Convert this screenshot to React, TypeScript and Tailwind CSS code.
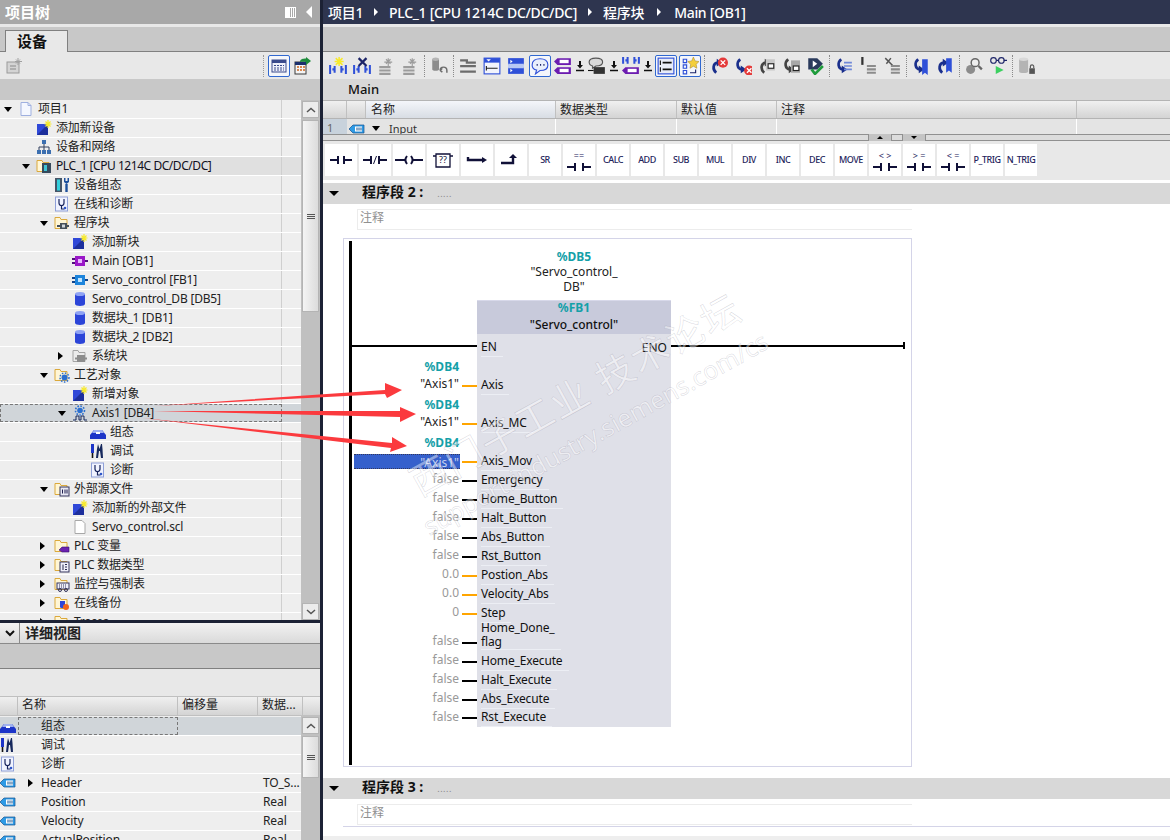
import React from "react";

const FONT = "[font-family:'Noto_Sans','Noto_Sans_CJK_SC',sans-serif]";

function Ic({ children, size = 16 }: { children: React.ReactNode; size?: number }) {
  return (
    <svg width={size} height={size} viewBox="0 0 16 16" className="shrink-0">
      {children}
    </svg>
  );
}

const Folder = ({ children }: { children?: React.ReactNode }) => (
  <Ic>
    <path d="M1 2.500h5l1 2h6v9H1z" fill="#fff6d6" stroke="#dba93c" />
    {children}
  </Ic>
);

const treeIcons: Record<string, React.ReactNode> = {
  doc: (
    <Ic>
      <path d="M3 1.500h7l3 3v10H3z" fill="#f4f7ff" stroke="#9fb0e0" />
      <path d="M10 1.500v3h3" fill="none" stroke="#9fb0e0" />
    </Ic>
  ),
  add: (
    <Ic>
      <rect x="1" y="4" width="11" height="11" fill="#2f48d8" />
      <path d="M1 15 12 4v11z" fill="#1d2f9c" />
      <path d="M12 0v8M8.500 4h7M9.500 1.500l5 5M14.500 1.500l-5 5" stroke="#f7ea2c" strokeWidth="1.200" />
    </Ic>
  ),
  net: (
    <Ic>
      <path d="M8 4v4M3 13V8h10v5M8 8v5" fill="none" stroke="#33415e" />
      <rect x="6" y="1" width="4" height="4" fill="#3c6fb0" />
      <rect x="1" y="11" width="4" height="4" fill="#3c6fb0" />
      <rect x="6" y="11" width="4" height="4" fill="#3c6fb0" />
      <rect x="11" y="11" width="4" height="4" fill="#3c6fb0" />
    </Ic>
  ),
  plc: (
    <Folder>
      <rect x="6" y="5" width="9" height="10" fill="#36495c" />
      <rect x="8" y="7" width="3" height="6" fill="#3fc4d4" />
    </Folder>
  ),
  config: (
    <Ic>
      <rect x="1" y="1" width="7" height="14" fill="#455568" />
      <rect x="3" y="2.500" width="3" height="11" fill="#33d0dd" />
      <path d="M12.500 7v8" stroke="#1c4f9c" strokeWidth="2.400" />
      <path d="M10 1v4l2.500 2 2.500-2V1l-1.500 0v3h-2V1z" fill="#1c4f9c" />
    </Ic>
  ),
  diag: (
    <Ic>
      <rect x="1.500" y="1" width="12" height="14" fill="#f0f3ff" stroke="#8fa0d8" />
      <path d="M5 3v4a2.500 2.500 0 0 0 5 0V3M7.500 9.500V13h3" fill="none" stroke="#17245c" strokeWidth="1.200" />
      <circle cx="11" cy="12" r="1.300" fill="#2f57c8" />
    </Ic>
  ),
  blocks: (
    <Folder>
      <rect x="6" y="8" width="7" height="6" fill="#46505a" />
      <path d="M3 11h12" stroke="#46505a" strokeWidth="2" />
      <rect x="8" y="9.500" width="3" height="3" fill="#cfd6dc" />
    </Folder>
  ),
  ob: (
    <Ic>
      <rect x="3" y="3" width="10" height="10" fill="#9a18c8" />
      <rect x="6" y="6" width="4" height="4" fill="#e8b8ff" />
      <path d="M0 6h3M0 10h3M13 8h3" stroke="#52107c" strokeWidth="2" />
    </Ic>
  ),
  fb: (
    <Ic>
      <rect x="3" y="3" width="10" height="10" fill="#1c84dc" />
      <rect x="6" y="6" width="4" height="4" fill="#bfe4ff" />
      <path d="M0 6h3M0 10h3M13 8h3" stroke="#10448c" strokeWidth="2" />
    </Ic>
  ),
  db: (
    <Ic>
      <path d="M3 3v10c0 2.600 10 2.600 10 0V3z" fill="#2c45d8" />
      <ellipse cx="8" cy="3" rx="5" ry="2" fill="#8ea2f4" />
    </Ic>
  ),
  sys: (
    <Ic>
      <path d="M1 2.500h5l1 2h6v9H1z" fill="#ececec" stroke="#a4a4a4" />
      <rect x="5" y="7" width="8" height="7" fill="#8d8d8d" />
      <path d="M3 10.500h12" stroke="#8d8d8d" strokeWidth="2" />
    </Ic>
  ),
  tech: (
    <Folder>
      <circle cx="10.500" cy="10.500" r="3" fill="#2a6fd0" />
      <circle cx="10.500" cy="10.500" r="4.500" fill="none" stroke="#2a6fd0" strokeWidth="1.500" strokeDasharray="1.500 1.500" />
    </Folder>
  ),
  axis: (
    <Ic>
      <circle cx="8" cy="5.500" r="2.800" fill="#2a6fd0" />
      <circle cx="8" cy="5.500" r="4.500" fill="none" stroke="#2a6fd0" strokeWidth="1.600" strokeDasharray="1.600 1.400" />
      <path d="M1 15h3v-4h3v4h2v-4h3v4h3" fill="none" stroke="#16285c" />
    </Ic>
  ),
  box: (
    <Ic>
      <path d="M0 15v-4l4-5h8l4 5v4z" fill="#1d35c8" />
      <path d="M4 6h8l2 3H2z" fill="#9fb0f0" />
      <rect x="6" y="8" width="4" height="2" fill="#fff" />
    </Ic>
  ),
  tools: (
    <Ic>
      <rect x="1" y="1" width="3" height="9" fill="#1d35c8" />
      <path d="M2.500 10v5" stroke="#111" strokeWidth="1.600" />
      <path d="M8 1l1.500 5L11 1l1 0 .5 5 .5 9h-2L10 8H9l-1 7H6l1-9z" fill="#16285c" />
    </Ic>
  ),
  src: (
    <Folder>
      <rect x="6" y="6" width="9" height="9" fill="#e8e8f4" stroke="#34345c" />
      <path d="M8.500 8.500v4M11 8.500v4M13 8.500v4" stroke="#1c1c4c" />
    </Folder>
  ),
  file: (
    <Ic>
      <path d="M3 1.500h7l3 3v10H3z" fill="#fff" stroke="#a8a8a8" />
    </Ic>
  ),
  tags: (
    <Folder>
      <path d="M5 12l3-3h7v5H8z" fill="#6c22b0" stroke="#3a1270" strokeWidth=".6" />
    </Folder>
  ),
  types: (
    <Folder>
      <rect x="6" y="5" width="9" height="10" fill="#f0f0fa" stroke="#34345c" />
      <path d="M9 7.500v5.500M11 7.500h2M11 10h2M11 12.500h2" stroke="#28284c" />
    </Folder>
  ),
  watch: (
    <Folder>
      <rect x="3" y="7" width="12" height="6" fill="#f0f0f8" stroke="#34345c" />
      <path d="M5 9h8M5 11h8" stroke="#34345c" strokeDasharray="1 1" />
      <circle cx="6" cy="14" r="1.500" fill="none" stroke="#34345c" />
      <circle cx="12" cy="14" r="1.500" fill="none" stroke="#34345c" />
    </Folder>
  ),
  backup: (
    <Folder>
      <path d="M6 6v6c0 1.500 5 1.500 5 0V6z" fill="#2c45d8" />
      <circle cx="12" cy="12" r="3" fill="#f0641c" />
    </Folder>
  ),
  tag: (
    <Ic>
      <path d="M0 8l4-4h11v8H4z" fill="#2e9be6" stroke="#14508c" strokeWidth=".7" />
      <rect x="6" y="5.500" width="7" height="5" fill="#fff" />
      <path d="M8 6.500v3M10 6.500v3M12 6.500v3" stroke="#14508c" />
    </Ic>
  ),
};

const treeRows = [
  { level: 0, open: "down", icon: "doc", label: "项目1" },
  { level: 1, icon: "add", label: "添加新设备" },
  { level: 1, icon: "net", label: "设备和网络" },
  { level: 1, open: "down", icon: "plc", label: "PLC_1 [CPU 1214C DC/DC/DC]", hi: true },
  { level: 2, icon: "config", label: "设备组态" },
  { level: 2, icon: "diag", label: "在线和诊断" },
  { level: 2, open: "down", icon: "blocks", label: "程序块" },
  { level: 3, icon: "add", label: "添加新块" },
  { level: 3, icon: "ob", label: "Main [OB1]" },
  { level: 3, icon: "fb", label: "Servo_control [FB1]" },
  { level: 3, icon: "db", label: "Servo_control_DB [DB5]" },
  { level: 3, icon: "db", label: "数据块_1 [DB1]" },
  { level: 3, icon: "db", label: "数据块_2 [DB2]" },
  { level: 3, open: "right", icon: "sys", label: "系统块" },
  { level: 2, open: "down", icon: "tech", label: "工艺对象" },
  { level: 3, icon: "add", label: "新增对象" },
  { level: 3, open: "down", icon: "axis", label: "Axis1 [DB4]", sel: true },
  { level: 4, icon: "box", label: "组态" },
  { level: 4, icon: "tools", label: "调试" },
  { level: 4, icon: "diag", label: "诊断" },
  { level: 2, open: "down", icon: "src", label: "外部源文件" },
  { level: 3, icon: "add", label: "添加新的外部文件" },
  { level: 3, icon: "file", label: "Servo_control.scl" },
  { level: 2, open: "right", icon: "tags", label: "PLC 变量" },
  { level: 2, open: "right", icon: "types", label: "PLC 数据类型" },
  { level: 2, open: "right", icon: "watch", label: "监控与强制表" },
  { level: 2, open: "right", icon: "backup", label: "在线备份" },
  { level: 2, open: "right", icon: "blocks", label: "Traces" },
];

const levelPad = ["pl-[4px]", "pl-[22px]", "pl-[40px]", "pl-[58px]", "pl-[76px]"];

function Caret({ dir }: { dir?: string }) {
  if (dir === "down") return <span className="w-0 h-0 border-x-[4px] border-x-transparent border-t-[5px] border-t-black" />;
  if (dir === "right") return <span className="w-0 h-0 border-y-[4px] border-y-transparent border-l-[5px] border-l-black" />;
  return null;
}

function Scrollbar({ height, grip }: { height: string; grip?: boolean }) {
  return (
    <div className="w-[19px] h-full bg-[#c0c0c0] flex flex-col items-center shrink-0 pt-[1px]">
      <div className="w-[17px] h-[17px] bg-[#ececec] border border-[#b4b4b4] flex items-center justify-center">
        <svg width="10" height="6" viewBox="0 0 10 6"><path d="M1 5l4-3.500L9 5" fill="none" stroke="#555" strokeWidth="1.500" /></svg>
      </div>
      <div className={`w-[17px] ${height} mt-[2px] bg-linear-to-r from-[#f4f4f4] to-[#dcdcdc] border border-[#b4b4b4] flex flex-col items-center justify-center gap-[1px]`}>
        {grip && (
          <>
            <span className="w-[8px] h-[1px] bg-[#555]" />
            <span className="w-[8px] h-[1px] bg-[#555]" />
            <span className="w-[8px] h-[1px] bg-[#555]" />
          </>
        )}
      </div>
      <div className="flex-1" />
    </div>
  );
}

function ProjectTree() {
  return (
    <div className="h-[520px] flex bg-[#eeeeee] overflow-hidden shrink-0">
      <div className="w-[301px] flex flex-col">
        {treeRows.map((r) => (
          <div
            key={r.label}
            className={`h-[19px] shrink-0 flex border-b border-white ${r.sel ? "bg-[#d0d5d9]" : r.hi ? "bg-[#e0e0e0]" : ""}`}
          >
            <div
              className={`w-[282px] border-r border-[#cfcfcf] flex items-center ${levelPad[r.level]} ${r.sel ? "outline-1 -outline-offset-1 outline-dashed outline-[#777]" : ""}`}
            >
              <span className="w-[14px] flex justify-start shrink-0"><Caret dir={r.open} /></span>
              <span className="w-[19px] shrink-0">{treeIcons[r.icon]}</span>
              <span className={`ml-px text-[12px] leading-none whitespace-nowrap ${r.hi ? "tracking-[-0.45px] text-[#101020]" : "tracking-[-0.2px] text-[#222]"}`}>{r.label}</span>
            </div>
          </div>
        ))}
      </div>
      <div className="relative h-full">
        <Scrollbar height="h-[192px]" grip />
        <div className="absolute bottom-0 left-[1px] w-[17px] h-[17px] bg-[#ececec] border border-[#b4b4b4] flex items-center justify-center">
          <svg width="10" height="6" viewBox="0 0 10 6"><path d="M1 1l4 3.500L9 1" fill="none" stroke="#555" strokeWidth="1.500" /></svg>
        </div>
      </div>
    </div>
  );
}

const detailRows = [
  { icon: "box", name: "组态", sel: true },
  { icon: "tools", name: "调试" },
  { icon: "diag", name: "诊断" },
  { icon: "tag", name: "Header", type: "TO_S...", open: true },
  { icon: "tag", name: "Position", type: "Real" },
  { icon: "tag", name: "Velocity", type: "Real" },
  { icon: "tag", name: "ActualPosition", type: "Real" },
];

function DetailView() {
  return (
    <div className="flex-1 flex flex-col min-h-0 overflow-hidden">
      <div className="h-[21px] shrink-0 flex bg-linear-to-b from-[#f2f2f2] to-[#dadada] border-b border-[#8a8a8a]">
        <div className="w-[20px] border-r border-[#8a8a8a] flex items-center justify-center">
          <svg width="10" height="7" viewBox="0 0 10 7"><path d="M1 1l4 4 4-4" fill="none" stroke="#111" strokeWidth="2" /></svg>
        </div>
        <div className="pl-[5px] text-[14px] font-bold leading-[20px] text-[#222]">详细视图</div>
      </div>
      <div className="h-[25px] shrink-0 bg-[#c8c8c8] border-b border-[#808080]" />
      <div className="h-[27px] shrink-0 bg-[#e8e8e8]" />
      <div className="h-[20px] shrink-0 flex bg-linear-to-b from-[#f0f0f0] to-[#d4d4d4] border-y border-[#c0c0c0] text-[12px] leading-[16px] text-[#222]">
        <div className="w-[18px] border-r border-[#c0c0c0]" />
        <div className="w-[160px] border-r border-[#c0c0c0] pl-[4px]">名称</div>
        <div className="w-[80px] border-r border-[#c0c0c0] pl-[4px]">偏移量</div>
        <div className="w-[45px] border-r border-[#c0c0c0] pl-[4px] whitespace-nowrap overflow-hidden">数据...</div>
      </div>
      <div className="flex-1 flex min-h-0">
        <div className="w-[301px] flex flex-col bg-[#eeeeee] pt-[1px]">
          {detailRows.map((r) => (
            <div key={r.name} className={`h-[19px] shrink-0 flex items-center border-b border-white text-[12px] tracking-[-0.1px] text-[#222] ${r.sel ? "bg-[#d0d5d9]" : ""}`}>
              <span className="w-[18px] shrink-0">{treeIcons[r.icon]}</span>
              <div className={`w-[160px] h-full flex items-center ${r.sel ? "outline-1 -outline-offset-1 outline-dashed outline-[#777]" : ""}`}>
                <span className="w-[23px] flex justify-center pl-[2px]">{r.open && <Caret dir="right" />}</span>
                <span className="leading-none">{r.name}</span>
              </div>
              <span className="w-[80px]" />
              <span className="pl-[5px] leading-none whitespace-nowrap">{r.type}</span>
            </div>
          ))}
        </div>
        <Scrollbar height="h-[42px]" grip />
      </div>
    </div>
  );
}

function LeftPane() {
  return (
    <div className="w-[320px] h-full flex flex-col shrink-0">
      <div className="h-[24px] shrink-0 bg-[#a8a8a8] flex items-center justify-between pl-[5px] pr-[8px]">
        <span className="text-[15px] font-bold text-white">项目树</span>
        <div className="flex items-center gap-[10px]">
          <span className="w-[11px] h-[11px] border border-white flex">
            <span className="w-[4px] h-full bg-white" />
            <span className="w-[1px] h-full bg-white ml-[1px]" />
            <span className="w-[1px] h-full bg-white ml-[1px]" />
          </span>
          <span className="w-0 h-0 border-y-[6px] border-y-transparent border-r-[6px] border-r-white" />
        </div>
      </div>
      <div className="h-[3px] shrink-0 bg-[#e8e8e8]" />
      <div className="h-[25px] shrink-0 bg-[#c8c8c8] border-b border-[#808080] flex items-end pl-[5px]">
        <div className="w-[63px] h-[22px] -mb-px bg-[#e8e8e8] border border-b-0 border-[#808080] text-[15px] font-bold leading-[21px] pl-[11px] text-[#111]">设备</div>
      </div>
      <div className="h-[27px] shrink-0 bg-[#e8e8e8] flex items-center pl-[6px] pr-[9px]">
        <svg width="16" height="16" viewBox="0 0 16 16">
          <rect x="1" y="4" width="12" height="11" fill="#d4d4d4" stroke="#9a9a9a" />
          <path d="M4 8h6M4 11h6" stroke="#8a8a8a" />
          <path d="M12 0v7M9 3.500h7M10 1.500l4 4M14 1.500l-4 4" stroke="#a0a0a0" />
        </svg>
        <div className="flex-1" />
        <div className="h-[22px] border-l border-dotted border-[#999] mr-[4px]" />
        <div className="w-[22px] h-[22px] bg-[#f4f6fb] border border-[#3068d0] rounded-[2px] flex items-center justify-center">
          <svg width="16" height="14" viewBox="0 0 16 14">
            <rect x="1" y="1" width="14" height="12" fill="#eef0fa" stroke="#3a4a8c" />
            <rect x="1" y="1" width="14" height="3" fill="#3a4a8c" />
            <path d="M3 6.500h10M3 9h10M3 11h10" stroke="#3a4a8c" strokeDasharray="2 1" />
          </svg>
        </div>
        <div className="w-[4px]" />
        <svg width="17" height="18" viewBox="0 0 17 18">
          <rect x="1" y="5" width="11" height="12" fill="#f4f4f4" stroke="#3a3a3a" />
          <rect x="1" y="5" width="11" height="3" fill="#1c2f6c" />
          <path d="M3 10h2M6 10h2M9 10h2M3 13h2M6 13h2M9 13h2" stroke="#d0661c" strokeWidth="1.500" />
          <path d="M6 5c0-3 3-3.500 6-3.500V0l5 4-5 4V5C10 4.500 8 4.500 6 5z" fill="#1f8c3c" />
        </svg>
      </div>
      <div className="h-[21px] shrink-0 bg-[#c8c8c8]" />
      <ProjectTree />
      <div className="h-[3px] shrink-0 bg-[#1c2235]" />
      <DetailView />
    </div>
  );
}

const NAVY = "#1a2f8c";
const BLUE = "#2f50d8";

const NetGlyph = () => (
  <path d="M1 7v8M15 7v8M3 11h2M13 11h-2M5 8v6M11 8v6" stroke={BLUE} strokeWidth="1.800" fill="none" />
);
const Star = ({ c = "#f7ea2c" }: { c?: string }) => (
  <path d="M9 0v8M5 4h8M6 1l6 6M12 1l-6 6" stroke={c} strokeWidth="1.300" />
);
const Lines = ({ c = "#8c8c8c" }: { c?: string }) => (
  <path d="M2 9h10M2 12h10M2 15h10" stroke={c} strokeWidth="1.800" />
);
const TagGlyph = ({ y = 0 }: { y?: number }) => (
  <g transform={`translate(0 ${y})`}>
    <path d="M0 4l3-3h12v6H3z" fill="#6c1cb0" />
    <rect x="5" y="2.500" width="8" height="3" fill="#fff" />
  </g>
);
// curved jump arrow, head top right (down: head bottom right)
const Hook = ({ down, c = NAVY }: { down?: boolean; c?: string }) => (
  <g transform={down ? "translate(0 16) scale(1 -1)" : undefined}>
    <path d="M7 5C2.500 5.500 2 11 5.500 14" fill="none" stroke={c} strokeWidth="2.400" />
    <path d="M6 1.500 11 5 6 8.500z" fill={c} />
  </g>
);
const RedX = () => (
  <>
    <circle cx="11.500" cy="5" r="4.500" fill="#e43a3a" />
    <path d="M9.500 3l4 4M13.500 3l-4 4" stroke="#fff" strokeWidth="1.200" />
  </>
);

const tb: Record<string, React.ReactNode> = {
  netNew: <><NetGlyph /><Star /></>,
  netDel: <><NetGlyph /><path d="M5 1l7 7M12 1l-7 7" stroke="#1c2468" strokeWidth="2" /></>,
  netA: <><Lines c="#9c9c9c" /><path d="M10 1v7M6.500 4.500h7M8 2l4 4M12 2l-4 4" stroke="#9c9c9c" /></>,
  dbBack: <><path d="M2 2v9c0 1.500 6 1.500 6 0V2z" fill="#8c8c8c" /><ellipse cx="5" cy="2" rx="3" ry="1.500" fill="#b4b4b4" /><path d="M9 12a3 3 0 0 1 6 0v2M9 12l2-2M9 12l2 1.500" fill="none" stroke="#6c6c6c" strokeWidth="1.300" /></>,
  lines: <path d="M1 3h6v2h8M1 8h14M1 13h14" stroke="#6c6c6c" strokeWidth="2" fill="none" />,
  hdrUp: <><rect x="1" y="1" width="14" height="14" fill="#f2f4fc" stroke={BLUE} /><rect x="1" y="1" width="14" height="4" fill={BLUE} /><path d="M3 10h10M3 8v4" stroke="#222" /><path d="M3 2l2 2 2-2z" fill="#fff" /></>,
  hdrDn: <><rect x="1" y="1" width="14" height="6" fill={BLUE} /><rect x="1" y="9" width="14" height="6" fill={BLUE} /><rect x="1" y="6" width="14" height="4" fill="#b8c8f4" /><path d="M3 2.500l2 1.500-2 1.500zM3 10.500l2 1.500-2 1.500z" fill="#fff" /></>,
  comment: <><path d="M8 1.500c4 0 7 2 7 5.500s-3 5-7 5l-4 3 1-3.500C2.500 11 1 9.500 1 7c0-3.500 3-5.500 7-5.500z" fill="#e8eefc" stroke={BLUE} /><path d="M5 7h1M8 7h1M11 7h1" stroke="#1c2468" strokeWidth="1.500" /></>,
  tagSet: <><TagGlyph /><TagGlyph y={8} /></>,
  cmtSet: <><path d="M7 1c4 0 6 1.500 6 3.500S11 8 7 8L4 10V8C2 7.500 1 6.500 1 4.500S3 1 7 1z" fill="#d8d8d8" stroke="#555" /><rect x="5" y="9" width="10" height="6" fill="#333" /><path d="M0 12h5" stroke="#111" /></>,
  netTag: <><path d="M1 0v6M15 0v6M3 3h2M13 3h-2M5 0v6M11 0v6" stroke={BLUE} strokeWidth="1.800" /><TagGlyph y={8} /></>,
  abs: <><rect x="1" y="1" width="14" height="14" fill="#e8ecf8" stroke={BLUE} /><path d="M5 5h8M5 11h8" stroke="#111" strokeWidth="1.500" /><path d="M3 3v4M3 9v4" stroke="#111" /></>,
  fav: <><path d="M2 2h3v3H2zM2 7h3v3H2zM2 12h3v3H2z" fill="none" stroke={BLUE} /><path d="M11 0l1.500 3.500 3.500.5-2.500 2.500.6 3.500-3.100-1.800L8 10l.6-3.500L6 4l3.500-.5z" fill="#f4cf3c" stroke="#a8882c" strokeWidth=".5" /><path d="M13 11v3H8" fill="none" stroke="#1c2468" /></>,
  errUp: <><Hook /><RedX /></>,
  errDn: <><Hook down /><g transform="translate(2 7)"><RedX /></g></>,
  gotoA: <><Hook c="#444" /><rect x="7" y="2" width="8" height="10" fill="#c8c8c8" /><rect x="9" y="6" width="5" height="4" fill="#fff" stroke="#222" /></>,
  gotoB: <><Hook down c="#444" /><rect x="8" y="3" width="8" height="11" fill="#a8a8a8" /><rect x="10" y="8" width="5" height="4" fill="#fff" stroke="#222" /></>,
  check: <><path d="M2 1h8l5 5-5 5H2z" fill="#2a3a5c" /><path d="M6 3l4 3-4 3z" fill="#fff" /><path d="M5 11l3 4 7-7" fill="none" stroke="#1f9c3c" strokeWidth="2.400" /></>,
  prevL: <><Hook down /><path d="M8 5h7M8 8h7M8 11h7" stroke="#6f88d8" strokeWidth="1.500" /></>,
  barL: <><path d="M3 0v7" stroke="#333" strokeWidth="2" /><path d="M7 8h8M7 11h8M7 14h8" stroke="#8c8c8c" strokeWidth="1.800" /></>,
  cutL: <><path d="M2 1l7 7M7 1L3 6" stroke="#555" strokeWidth="1.300" /><path d="M7 8h8M7 11h8M7 14h8" stroke="#8c8c8c" strokeWidth="1.800" /></>,
  bmA: <><Hook down /><path d="M9 2h5v14l-2.500-2L9 16z" fill={BLUE} /></>,
  bmB: <><Hook /><path d="M9 1h5v13l-2.500-2L9 14z" fill={BLUE} /></>,
  find: <><circle cx="5" cy="11" r="4" fill="#8c8c8c" /><circle cx="9" cy="5" r="3.500" fill="#eee" stroke="#666" strokeWidth="1.300" /><path d="M12 8l3 3" stroke="#666" strokeWidth="2" /></>,
  glasses: <><circle cx="4" cy="3" r="2.500" fill="none" stroke="#1c2468" /><circle cx="11" cy="3" r="2.500" fill="none" stroke="#1c2468" /><path d="M6.500 3h2M13 3h3" stroke="#1c2468" /><path d="M6 8l7 3.500L6 15z" fill="#3cd060" /></>,
  dbLock: <><path d="M1 2v11c0 1.500 8 1.500 8 0V2z" fill="#b4b4b4" /><ellipse cx="5" cy="2" rx="4" ry="1.500" fill="#d8d8d8" /><rect x="10" y="10" width="5" height="5" fill="#555" /><path d="M11 10V8.500a1.500 1.500 0 0 1 3 0V10" fill="none" stroke="#555" /></>,
};

const DownArrow = () => (
  <svg width="10" height="12" viewBox="0 0 10 12" className="shrink-0">
    <path d="M5 1v5" stroke="#111" strokeWidth="2" />
    <path d="M2 5h6L5 8.500z" fill="#111" />
    <path d="M1 10.500h8" stroke="#111" strokeWidth="1.500" />
  </svg>
);

function TbBtn({ k, sel, drop }: { k: string; sel?: boolean; drop?: boolean }) {
  const inner = (
    <svg width="18" height="18" viewBox="0 0 16 16" className="shrink-0">{tb[k]}</svg>
  );
  if (sel)
    return <div className="w-[22px] h-[22px] mx-px bg-[#f4f6fb] border border-[#3068d0] rounded-[2px] flex items-center justify-center">{inner}</div>;
  return (
    <div className={`${drop ? "w-[34px] gap-[3px]" : "w-[24px]"} h-[22px] flex items-center justify-center`}>
      {inner}
      {drop && <DownArrow />}
    </div>
  );
}

const Sep = () => <div className="h-[22px] w-px mx-[2px] border-l border-dotted border-[#8a8a8a]" />;

function EditorToolbar() {
  const groups: { k: string; sel?: boolean; drop?: boolean }[][] = [
    [{ k: "netNew" }, { k: "netDel" }, { k: "netA" }, { k: "netA" }],
    [{ k: "dbBack" }],
    [
      { k: "lines" }, { k: "hdrUp" }, { k: "hdrDn" }, { k: "comment", sel: true },
      { k: "tagSet", drop: true }, { k: "cmtSet", drop: true }, { k: "netTag", drop: true },
      { k: "abs", sel: true }, { k: "fav", sel: true },
    ],
    [{ k: "errUp" }, { k: "errDn" }, { k: "gotoA" }, { k: "gotoB" }, { k: "check" }],
    [{ k: "prevL" }, { k: "barL" }, { k: "cutL" }],
    [{ k: "bmA" }, { k: "bmB" }],
    [{ k: "find" }, { k: "glasses" }],
    [{ k: "dbLock" }],
  ];
  return (
    <div className="h-[27px] shrink-0 bg-[#e8e8e8] flex items-center pl-[3px]">
      {groups.map((g, i) => (
        <React.Fragment key={i}>
          {i > 0 && <Sep />}
          {g.map((b, j) => <TbBtn key={j} {...b} />)}
        </React.Fragment>
      ))}
    </div>
  );
}

const C = "#111138";
const instr: Record<string, React.ReactNode> = {
  no: <path d="M5 16h8M13 12v8M19 12v8M19 16h8" stroke={C} strokeWidth="2" fill="none" />,
  nc: <><path d="M4 16h8M12 12v8M20 12v8M20 16h8" stroke={C} strokeWidth="2" fill="none" /><path d="M14.500 20l3-8" stroke={C} /></>,
  coil: <path d="M2 16h10M20 16h10M14 12c-2 2.500-2 5.500 0 8M18 12c2 2.500 2 5.500 0 8" stroke={C} strokeWidth="2" fill="none" />,
  box: <path d="M9 10v13h14V10zM6 12h3M23 12h3" stroke={C} strokeWidth="1.300" fill="#fff" />,
  jmp: <path d="M7 13v3h14" stroke={C} strokeWidth="2.400" fill="none" />,
  ret: <path d="M6 19h12v-5" stroke={C} strokeWidth="2.400" fill="none" />,
};

const instrButtons = [
  { svg: "no" }, { svg: "nc" }, { svg: "coil" }, { svg: "box" }, { svg: "jmp" }, { svg: "ret" },
  { text: "SR" }, { cmp: "==" }, { text: "CALC" }, { text: "ADD" }, { text: "SUB" }, { text: "MUL" },
  { text: "DIV" }, { text: "INC" }, { text: "DEC" }, { text: "MOVE" },
  { cmp: "< >" }, { cmp: "> =" }, { cmp: "< =" }, { text: "P_TRIG" }, { text: "N_TRIG" },
];

function InstructionBar() {
  return (
    <div className="h-[39px] shrink-0 bg-[#e8e8e8] flex items-start pt-[3px] pl-[2px] gap-[2px]">
      {instrButtons.map((b, i) => (
        <div key={i} className="relative w-[32px] h-[32px] bg-white flex flex-col items-center justify-center shrink-0">
          {b.svg && (
            <svg width="32" height="32" viewBox="0 0 32 32">
              {instr[b.svg]}
              {b.svg === "jmp" && <path d="M21 13l5 3-5 3z" fill={C} />}
              {b.svg === "ret" && <path d="M14 14l4-4 4 4z" fill={C} />}
            </svg>
          )}
          {b.svg === "box" && <span className="absolute top-[10px] text-[9px] leading-[12px] text-[#111138]">??</span>}
          {b.text && <span className="text-[9px] font-medium tracking-[-0.5px] text-[#24245c] whitespace-nowrap">{b.text}</span>}
          {b.cmp && (
            <>
              <span className="text-[9px] leading-[10px] mt-[4px] text-[#24245c] whitespace-pre">{b.cmp}</span>
              <svg width="32" height="12" viewBox="0 0 32 12" className="shrink-0">
                <path d="M4 6h8M12 2v8M20 2v8M20 6h8" stroke={C} strokeWidth="2" fill="none" />
              </svg>
            </>
          )}
        </div>
      ))}
    </div>
  );
}

function InterfaceTable() {
  return (
    <div className="shrink-0">
      <div className="h-[21px] bg-[#d8d8d8] pl-[25px] text-[13px] font-medium leading-[20px] text-[#111]">Main</div>
      <div className="h-[19px] flex bg-linear-to-b from-[#f0f0f0] to-[#d4d4d4] border-y border-[#b4b4b4] text-[12px] leading-[17px] text-[#222]">
        <div className="w-[24px] border-r border-[#c0c0c0]" />
        <div className="w-[19px] border-r border-[#c0c0c0]" />
        <div className="w-[190px] border-r border-[#c0c0c0] pl-[5px] from-[#f4f6fa] to-[#d8dde4] bg-linear-to-b">名称</div>
        <div className="w-[121px] border-r border-[#c0c0c0] pl-[4px]">数据类型</div>
        <div className="w-[100px] border-r border-[#c0c0c0] pl-[4px]">默认值</div>
        <div className="w-[300px] border-r border-[#c0c0c0] pl-[4px]">注释</div>
      </div>
      <div className="h-[15px] flex bg-[#e4e4e4] text-[11px] text-[#333] overflow-hidden">
        <div className="w-[24px] h-full bg-[#c8d2dc] pl-[4px] leading-[18px] text-[#666]">1</div>
        <div className="w-[19px] pl-[2px] pt-[2px]">{treeIcons.tag}</div>
        <div className="w-[190px] h-full border-r border-white flex items-center pl-[6px] pt-[4px] gap-[9px]">
          <Caret dir="down" /><span className="leading-none">Input</span>
        </div>
        <div className="w-[121px] h-full border-r border-white" />
        <div className="w-[100px] h-full border-r border-white" />
        <div className="w-[300px] h-full border-r border-white" />
      </div>
      <div className="h-[7px] bg-[#dcdcdc] border-y border-[#909090] flex pl-[545px]">
        <div className="w-[24px] h-[7px] -mt-px bg-[#c4c4c4] border-x border-[#909090] flex justify-center items-center">
          <span className="w-0 h-0 border-x-[3px] border-x-transparent border-b-[3px] border-b-black" />
        </div>
        <div className="w-[10px]" />
        <div className="w-[24px] h-[7px] -mt-px bg-[#c4c4c4] border-x border-[#909090] flex justify-center items-center">
          <span className="w-0 h-0 border-x-[3px] border-x-transparent border-t-[3px] border-t-black" />
        </div>
      </div>
    </div>
  );
}

function NetworkHeader({ n }: { n: number }) {
  return (
    <>
      <div className="h-[21px] shrink-0 bg-[#d8d8d8] flex items-center">
        <span className="w-[39px] pl-[6px] flex"><span className="w-0 h-0 border-x-[5px] border-x-transparent border-t-[5px] border-t-black" /></span>
        <span className="text-[14px] font-bold leading-[18px] mb-[3px] text-[#111] whitespace-pre">程序段 {n} :</span>
        <span className="ml-[14px] text-[9px] leading-none text-[#888] tracking-[0.5px]">.....</span>
      </div>
      <div className="h-[5px] shrink-0" />
      <div className="h-[21px] shrink-0 ml-[34px] w-[555px] border-t border-l border-b border-[#ececec] pl-[2px] text-[12px] leading-[15px] text-[#909090]">注释</div>
    </>
  );
}

type Pin = { name: React.ReactNode; val: string; orange?: boolean; db?: boolean; sel?: boolean; tall?: boolean; last?: boolean };

const pins: Pin[] = [
  { name: "Axis", val: '"Axis1"', orange: true, db: true },
  { name: "Axis_MC", val: '"Axis1"', orange: true, db: true },
  { name: "Axis_Mov", val: '"Axis1"', orange: true, db: true, sel: true },
  { name: "Emergency", val: "false" },
  { name: "Home_Button", val: "false" },
  { name: "Halt_Button", val: "false" },
  { name: "Abs_Button", val: "false" },
  { name: "Rst_Button", val: "false" },
  { name: "Postion_Abs", val: "0.0", orange: true },
  { name: "Velocity_Abs", val: "0.0", orange: true },
  { name: "Step", val: "0", orange: true },
  { name: <>Home_Done_<br />flag</>, val: "false", tall: true },
  { name: "Home_Execute", val: "false" },
  { name: "Halt_Execute", val: "false" },
  { name: "Abs_Execute", val: "false" },
  { name: "Rst_Execute", val: "false", last: true },
];

function PinRow({ p }: { p: Pin }) {
  const h = p.db ? "h-[38px]" : p.tall ? "h-[29px]" : p.last ? "h-[18px]" : "h-[19px]";
  const isText = p.val.startsWith('"');
  return (
    <div className={`${h} flex shrink-0`}>
      <div className="w-[125px] flex flex-col justify-end">
        {p.db && <div className="h-[19px] pr-[18px] text-right text-[12px] font-bold leading-[19px] text-[#14a0a8]">%DB4</div>}
        <div className="h-[19px] flex items-center justify-end">
          <span
            className={`text-[12px] leading-[15px] h-[15px] text-right whitespace-nowrap pr-[1px] mr-[2px] ${
              p.sel ? "w-[106px] bg-[#3560cc] border-y border-dotted border-[#33385c] leading-[13px] text-[#c8d2f0]" : isText ? "text-[#222] -translate-y-[2px]" : "text-[#999] -translate-y-[2px]"
            }`}
          >
            {p.val}
          </span>
          <span className={`w-[15px] h-[2px] shrink-0 ${p.orange ? "bg-[#ffa500]" : "bg-black"}`} />
        </div>
      </div>
      <div className="w-[194px] bg-[#dfe0e8] flex flex-col justify-end pl-[4px]">
        <div className={`${p.tall ? "leading-[14px] pb-[2px]" : "leading-[18px] h-[19px]"} text-[12px] tracking-[-0.15px] text-[#111]`}>
          <span className="inline-block border-b border-[#eceef4] pr-[6px] whitespace-nowrap">{p.name}</span>
        </div>
      </div>
    </div>
  );
}

function NetworkBox() {
  return (
    <div className="ml-[20px] mt-[8px] w-[569px] h-[529px] shrink-0 border border-[#d4d4e8] bg-white flex pl-[5px] pt-[2px] pb-px">
      <div className="w-[3px] h-full bg-black shrink-0" />
      <div className="flex flex-col">
        <div className="ml-[125px] w-[194px] h-[59px] shrink-0 flex flex-col items-center justify-end pb-[6px] text-[12px] leading-[15px] text-[#222]">
          <span className="font-bold text-[#14a0a8]">%DB5</span>
          <span>"Servo_control_</span>
          <span>DB"</span>
        </div>
        <div className="ml-[125px] w-[194px] h-[34px] shrink-0 bg-[#c8cadb] border-t border-[#d8d9ea] flex flex-col items-center text-[12px] leading-[17px]">
          <span className="font-bold text-[#14a0a8] -mt-[2px]">%FB1</span>
          <span className="font-medium text-[#111]">"Servo_control"</span>
        </div>
        <div className="h-[23px] shrink-0 flex items-center">
          <span className="w-[125px] h-[2px] bg-black" />
          <div className="w-[194px] h-full bg-[#dfe0e8] flex justify-between items-center px-[4px] text-[12px] text-[#111]">
            <span className="border-b border-[#eceef4] pr-[6px] mt-[4px]">EN</span>
            <span className="mt-[4px]">ENO</span>
          </div>
          <span className="w-[232px] h-[2px] bg-black" />
          <span className="w-[2px] h-[7px] bg-black" />
        </div>
        {pins.map((p, i) => <PinRow key={i} p={p} />)}
      </div>
    </div>
  );
}

function BreadArrow() {
  return <span className="w-0 h-0 border-y-[4px] border-y-transparent border-l-[4px] border-l-white" />;
}

function RightPane() {
  return (
    <div className="flex-1 h-full flex flex-col min-w-0 bg-white">
      <div className="h-[24px] shrink-0 bg-[#2e354f] flex items-center pl-[5px] gap-[11px] text-white text-[14px] font-medium tracking-[-0.3px] whitespace-nowrap">
        <span>项目1</span><BreadArrow />
        <span>PLC_1 [CPU 1214C DC/DC/DC]</span><BreadArrow />
        <span>程序块</span><div className="flex ml-[2px]"><BreadArrow /></div>
        <span className="ml-[2px]">Main [OB1]</span>
      </div>
      <div className="h-[3px] shrink-0 bg-[#e8e8e8]" />
      <div className="h-[25px] shrink-0 bg-[#c8c8c8] border-b border-[#808080]" />
      <EditorToolbar />
      <InterfaceTable />
      <InstructionBar />
      <div className="h-[3px] shrink-0 bg-white" />
      <NetworkHeader n={2} />
      <NetworkBox />
      <div className="h-[11px] shrink-0" />
      <NetworkHeader n={3} />
      <div className="ml-[20px] mt-[1px] h-px shrink-0 bg-[#d4d4e8]" />
      <div className="h-[9px] shrink-0" />
      <div className="flex-1 bg-[#eeeeee]" />
    </div>
  );
}

export default function App() {
  return (
    <div className={`relative w-[1170px] h-[840px] overflow-hidden flex ${FONT}`}>
      <LeftPane />
      <div className="w-[3px] h-full bg-[#1c2235] shrink-0" />
      <RightPane />

      {/* forum watermark */}
      <div className="absolute left-[375px] top-[372px] w-[400px] text-center -rotate-[29deg] pointer-events-none whitespace-nowrap text-[38px] leading-[44px] tracking-[2px] text-white/45 [-webkit-text-stroke:0.5px_rgba(120,120,140,0.3)]">
        西门子工业 技术论坛
      </div>
      <div className="absolute left-[395px] top-[418px] w-[400px] text-center -rotate-[29deg] pointer-events-none whitespace-nowrap text-[25px] leading-[30px] text-white/45 [-webkit-text-stroke:0.5px_rgba(120,120,140,0.3)]">
        support.industry.siemens.com/cs
      </div>

      {/* red annotation arrows */}
      <svg className="absolute inset-0 pointer-events-none" width="1170" height="840" viewBox="0 0 1170 840">
        <path d="M154 406 385 390 385 383 402 390 387 398 385 394Z" fill="#fb3a3e" />
        <path d="M153 411 400 411 400 407 416 414 400 422 400 417Z" fill="#fb3a3e" />
        <path d="M142 418 392 443 392 437 407 446 390 452 391 448Z" fill="#fb3a3e" />
      </svg>
    </div>
  );
}
